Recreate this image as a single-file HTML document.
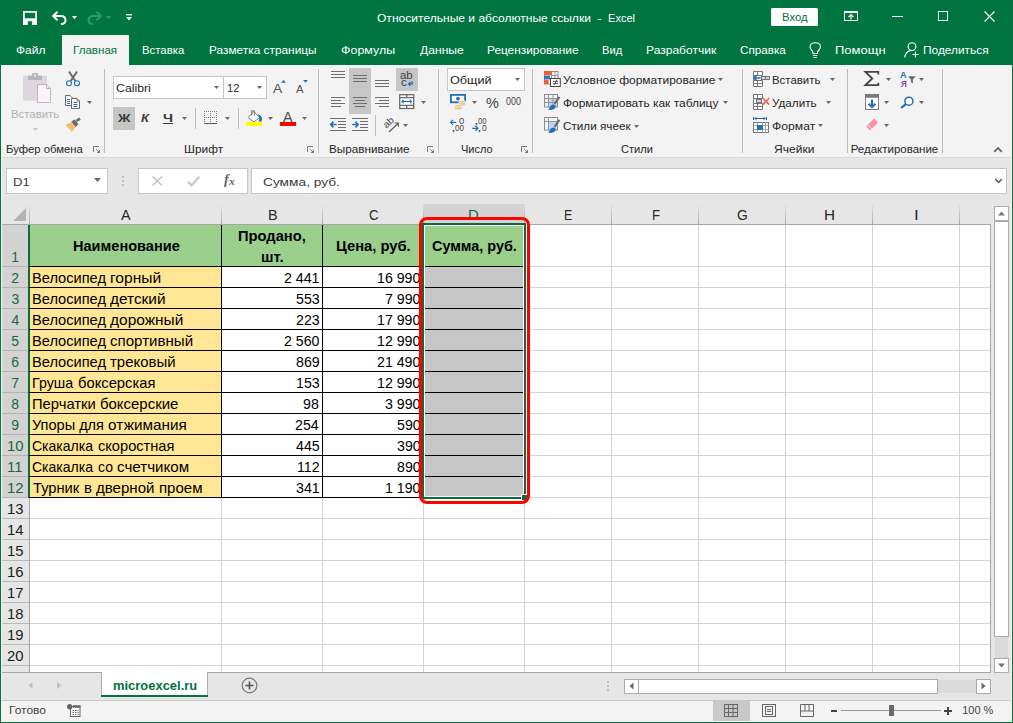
<!DOCTYPE html>
<html><head><meta charset="utf-8"><title>Excel</title>
<style>
html,body{margin:0;padding:0;}
body{width:1013px;height:723px;overflow:hidden;position:relative;background:#e6e6e6;font-family:"Liberation Sans",sans-serif;}
body>div,body>span,body>svg{position:absolute;display:block;}
.t{white-space:pre;transform-origin:0 0;}
svg{overflow:visible;}
</style></head><body>
<div style="left:0px;top:0px;width:1013px;height:65px;background:#007540;"></div>
<div style="left:0px;top:65px;width:1013px;height:92px;background:#f3f3f3;"></div>
<div style="left:62px;top:35px;width:67px;height:31px;background:#f3f3f3;"></div>
<svg style="left:23px;top:11px;" width="14" height="14" viewBox="0 0 14 14"><path d="M0.9 0.9 H13.1 V13.1 H0.9 Z" fill="none" stroke="#fff" stroke-width="1.8"/><rect x="0.9" y="7.3" width="12.2" height="5.8" fill="#fff"/><rect x="4.8" y="10.2" width="4.4" height="3.8" fill="#007540"/></svg>
<svg style="left:51.5px;top:10.5px;" width="15" height="14" viewBox="0 0 15 14"><path d="M5.5 0.8 L1.2 5 L5.5 9.2" fill="none" stroke="#fff" stroke-width="2"/><path d="M1.5 5 H8.5 Q13.5 5 13.5 9.2 Q13.5 13 9 13" fill="none" stroke="#fff" stroke-width="2"/></svg>
<svg style="left:71.5px;top:15.8px;" width="5" height="3.2" viewBox="0 0 5 3.2"><path d="M0 0 H5 L2.5 3.2 Z" fill="#fff"/></svg>
<svg style="left:86.8px;top:10.5px;" width="15" height="14" viewBox="0 0 15 14"><path d="M9.5 0.8 L13.8 5 L9.5 9.2" fill="none" stroke="#2f9a6c" stroke-width="2"/><path d="M13.5 5 H6.5 Q1.5 5 1.5 9.2 Q1.5 13 6 13" fill="none" stroke="#2f9a6c" stroke-width="2"/></svg>
<svg style="left:106.3px;top:15.8px;" width="5" height="3.2" viewBox="0 0 5 3.2"><path d="M0 0 H5 L2.5 3.2 Z" fill="#2f9a6c"/></svg>
<svg style="left:125.5px;top:14.4px;" width="6" height="7" viewBox="0 0 6 7"><path d="M0 0.7 H6" stroke="#fff" stroke-width="1.3"/><path d="M0 2.9 H6 L3 6.4 Z" fill="#fff"/></svg>
<span class="t" style="left:376.93px;top:13px;font-size:11.5px;line-height:11.5px;color:#fff;transform:scaleX(1.0476);">Относительные и абсолютные ссылки</span>
<span class="t" style="left:597.41px;top:13px;font-size:11.5px;line-height:11.5px;color:#fff;transform:scaleX(1.1713);">-</span>
<span class="t" style="left:607.59px;top:13px;font-size:11.5px;line-height:11.5px;color:#fff;transform:scaleX(0.9616);">Excel</span>
<div style="left:771px;top:7.5px;width:47px;height:18.3px;background:#fff;border-radius:1.5px;"></div>
<span class="t" style="left:781.57px;top:12px;font-size:11.5px;line-height:11.5px;color:#007540;transform:scaleX(0.9845);">Вход</span>
<svg style="left:843.5px;top:11px;" width="14" height="10" viewBox="0 0 14 10"><rect x="0.5" y="0.5" width="13" height="9" fill="none" stroke="#fff"/><path d="M0.5 1.2 H13.5" stroke="#fff" stroke-width="1.6"/><path d="M7 8.5 V3.8 M4.6 6 L7 3.6 L9.4 6" fill="none" stroke="#fff" stroke-width="1.1"/></svg>
<div style="left:892px;top:16px;width:10.5px;height:1px;background:#fff;"></div>
<svg style="left:938px;top:11px;" width="10" height="10" viewBox="0 0 10 10"><rect x="0.5" y="0.5" width="9" height="9" fill="none" stroke="#fff" stroke-width="1"/></svg>
<svg style="left:983.5px;top:10.8px;" width="11" height="11" viewBox="0 0 11 11"><path d="M0.5 0.5 L10.5 10.5 M10.5 0.5 L0.5 10.5" stroke="#fff" stroke-width="1.1"/></svg>
<span class="t" style="left:15.82px;top:45px;font-size:11.5px;line-height:11.5px;color:#fff;transform:scaleX(1.0436);">Файл</span>
<span class="t" style="left:141.67px;top:45px;font-size:11.5px;line-height:11.5px;color:#fff;transform:scaleX(0.9877);">Вставка</span>
<span class="t" style="left:208.63px;top:45px;font-size:11.5px;line-height:11.5px;color:#fff;transform:scaleX(1.0313);">Разметка страницы</span>
<span class="t" style="left:340.69px;top:45px;font-size:11.5px;line-height:11.5px;color:#fff;transform:scaleX(1.0823);">Формулы</span>
<span class="t" style="left:419.92px;top:45px;font-size:11.5px;line-height:11.5px;color:#fff;transform:scaleX(1.0546);">Данные</span>
<span class="t" style="left:487.03px;top:45px;font-size:11.5px;line-height:11.5px;color:#fff;transform:scaleX(1.0303);">Рецензирование</span>
<span class="t" style="left:601.68px;top:45px;font-size:11.5px;line-height:11.5px;color:#fff;transform:scaleX(0.9707);">Вид</span>
<span class="t" style="left:645.51px;top:45px;font-size:11.5px;line-height:11.5px;color:#fff;transform:scaleX(1.0471);">Разработчик</span>
<span class="t" style="left:740.02px;top:45px;font-size:11.5px;line-height:11.5px;color:#fff;transform:scaleX(1.0168);">Справка</span>
<span class="t" style="left:834.75px;top:45px;font-size:11.5px;line-height:11.5px;color:#fff;transform:scaleX(1.1291);">Помощн</span>
<span class="t" style="left:922.74px;top:45px;font-size:11.5px;line-height:11.5px;color:#fff;transform:scaleX(1.0325);">Поделиться</span>
<span class="t" style="left:73.15px;top:45px;font-size:11.5px;line-height:11.5px;color:#007540;transform:scaleX(1.0085);">Главная</span>
<svg style="left:809px;top:42px;" width="13" height="17" viewBox="0 0 13 17"><path d="M4 11.5 Q4 9.5 2.5 8 Q1 6.5 1 4.8 Q1.2 0.8 6.2 0.8 Q11.2 0.8 11.4 4.8 Q11.4 6.5 9.9 8 Q8.4 9.5 8.4 11.5 Z" fill="none" stroke="#fff" stroke-width="1.1"/><path d="M4.2 13.5 H8.2 M4.7 15.5 H7.7" stroke="#fff" stroke-width="1.1"/></svg>
<svg style="left:904px;top:42px;" width="15" height="17" viewBox="0 0 15 17"><circle cx="8" cy="4.6" r="3.9" fill="none" stroke="#fff" stroke-width="1.1"/><path d="M0.8 15.5 Q1.5 9.5 6.5 8.6" fill="none" stroke="#fff" stroke-width="1.1"/><path d="M8.5 12.5 H14.5 M11.5 9.5 V15.5" stroke="#fff" stroke-width="1.1"/></svg>
<svg style="left:22px;top:72px;" width="30" height="32" viewBox="0 0 30 32"><rect x="1" y="3.7" width="24" height="25" rx="1.2" fill="#ddd6dd"/>
<rect x="6.1" y="3.7" width="13.8" height="4.2" fill="#b9b1b9"/><rect x="10.2" y="1" width="5.8" height="4" rx="1" fill="#b9b1b9"/><circle cx="13.1" cy="3.6" r="1.1" fill="#f3f3f3"/>
<path d="M15.5 12.5 H24.5 L28.5 16.5 V30.5 H15.5 Z" fill="#faf4fa" stroke="#bfb6bf"/><path d="M24.5 12.5 V16.5 H28.5" fill="none" stroke="#bfb6bf"/></svg>
<span class="t" style="left:10.77px;top:109px;font-size:11.5px;line-height:11.5px;color:#b1b1b1;transform:scaleX(0.9887);">Вставить</span>
<svg style="left:33.0px;top:127.80000000000001px;" width="5" height="3.0" viewBox="0 0 5 3.0"><path d="M0 0 H5 L2.5 3.0 Z" fill="#c4c4c4"/></svg>
<svg style="left:65px;top:71px;" width="16" height="16" viewBox="0 0 16 16"><path d="M4 0.6 L10.3 10 M12 0.6 L5.7 10" stroke="#6a6a6a" stroke-width="1.9" fill="none"/>
<circle cx="4" cy="12.2" r="2.5" fill="none" stroke="#1e72c2" stroke-width="1.1"/><circle cx="12" cy="12.2" r="2.5" fill="none" stroke="#1e72c2" stroke-width="1.1"/></svg>
<svg style="left:64px;top:94px;" width="17" height="16" viewBox="0 0 17 16"><path d="M1.5 1.5 H6 L8.5 4 V11.5 H1.5 Z" fill="#fff" stroke="#6a6a6a"/>
<path d="M3 5.5H6M3 7.5H6M3 9.5H6" stroke="#1e72c2"/>
<path d="M7.5 4.5 H13 L15.5 7 V14.5 H7.5 Z" fill="#fff" stroke="#6a6a6a"/><path d="M13 4.5V7H15.5" fill="none" stroke="#6a6a6a" stroke-width="0.8"/><path d="M9.5 8.5H13.5M9.5 10.5H13.5M9.5 12.5H13.5" stroke="#1e72c2"/></svg>
<svg style="left:87.1px;top:101.0px;" width="5" height="3.0" viewBox="0 0 5 3.0"><path d="M0 0 H5 L2.5 3.0 Z" fill="#666"/></svg>
<svg style="left:65px;top:117px;" width="17" height="16" viewBox="0 0 17 16"><path d="M0.3 8 L6.3 5.2 L10.5 10 L7 14.8 Z" fill="#f5bd6b"/><path d="M6.2 4.6 L9.8 2.4 L13.4 7.2 L10.6 10 Z" fill="#6a6a6a"/><path d="M11.3 4 L15 1.6" stroke="#6a6a6a" stroke-width="2.6"/></svg>
<span class="t" style="left:5.67px;top:144px;font-size:11.5px;line-height:11.5px;color:#262626;transform:scaleX(0.9817);">Буфер обмена</span>
<svg style="left:93px;top:146px;" width="8" height="8" viewBox="0 0 8 8"><path d="M0.5 6 V0.5 H6" fill="none" stroke="#777" stroke-width="1"/><path d="M7 3.6 V7 H3.6 Z" fill="#777"/><path d="M3.2 3.2 L6 6" stroke="#777" stroke-width="1"/></svg>
<div style="left:104px;top:69px;width:1px;height:84px;background:#bcbcbc;"></div>
<div style="left:113px;top:76px;width:111px;height:23px;background:#fff;box-sizing:border-box;border:1px solid #c6c6c6;"></div>
<div style="left:224px;top:76px;width:43px;height:23px;background:#fff;box-sizing:border-box;border:1px solid #c6c6c6;border-left:none;"></div>
<div style="left:223px;top:76px;width:1px;height:23px;background:#c6c6c6;"></div>
<span class="t" style="left:115.69px;top:83px;font-size:11.5px;line-height:11.5px;color:#262626;transform:scaleX(1.0690);">Calibri</span>
<svg style="left:214.0px;top:86.0px;" width="5" height="3.0" viewBox="0 0 5 3.0"><path d="M0 0 H5 L2.5 3.0 Z" fill="#666"/></svg>
<span class="t" style="left:226.85px;top:83px;font-size:11.5px;line-height:11.5px;color:#262626;transform:scaleX(0.9701);">12</span>
<svg style="left:257.0px;top:86.0px;" width="5" height="3.0" viewBox="0 0 5 3.0"><path d="M0 0 H5 L2.5 3.0 Z" fill="#666"/></svg>
<span class="t" style="left:273.27px;top:82px;font-size:13.5px;line-height:13.5px;color:#505050;transform:scaleX(1.0167);">A</span>
<svg style="left:281px;top:80px;" width="5" height="3" viewBox="0 0 5 3"><path d="M0 2.8 L2.5 0 L5 2.8 Z" fill="#1e72c2"/></svg>
<span class="t" style="left:295.98px;top:84px;font-size:10.5px;line-height:10.5px;color:#505050;transform:scaleX(1.0774);">A</span>
<svg style="left:303px;top:80px;" width="5" height="3" viewBox="0 0 5 3"><path d="M0 0 L2.5 2.8 L5 0 Z" fill="#1e72c2"/></svg>
<div style="left:113px;top:107px;width:22px;height:23px;background:#c6c6c6;"></div>
<span class="t" style="left:117.74px;top:113px;font-size:11.5px;line-height:11.5px;color:#3a3a3a;font-weight:700;transform:scaleX(1.1918);">Ж</span>
<span class="t" style="left:140.78px;top:113px;font-size:11.5px;line-height:11.5px;color:#3a3a3a;font-weight:700;font-style:italic;transform:scaleX(1.1284);">К</span>
<span class="t" style="left:162.95px;top:113px;font-size:11.5px;line-height:11.5px;color:#3a3a3a;font-weight:700;transform:scaleX(1.2380);">Ч</span>
<div style="left:163px;top:123px;width:10px;height:1px;background:#3a3a3a;"></div>
<svg style="left:181.8px;top:117.0px;" width="5" height="3.0" viewBox="0 0 5 3.0"><path d="M0 0 H5 L2.5 3.0 Z" fill="#666"/></svg>
<div style="left:195px;top:108px;width:1px;height:21px;background:#bcbcbc;"></div>
<svg style="left:204px;top:111px;" width="13" height="13" viewBox="0 0 13 13"><path d="M0 0.5H13M0 6.5H13M0.5 0V12M6.5 0V12M12.5 0V12" stroke="#7a7a7a" stroke-dasharray="1 1" fill="none" shape-rendering="crispEdges"/><path d="M0 12.5H13" stroke="#555"/></svg>
<svg style="left:225.0px;top:117.0px;" width="5" height="3.0" viewBox="0 0 5 3.0"><path d="M0 0 H5 L2.5 3.0 Z" fill="#666"/></svg>
<div style="left:238px;top:108px;width:1px;height:21px;background:#bcbcbc;"></div>
<svg style="left:246px;top:109px;" width="17" height="17" viewBox="0 0 17 17"><path d="M2.2 8.5 L7.9 2.5 L13.5 8.5 L7.9 13 Z" fill="#fff" stroke="#777" stroke-width="1"/><path d="M5.7 6.4 V1.8 H8.3 V6.4" fill="none" stroke="#777" stroke-width="1"/>
<path d="M11.8 4.8 Q17.4 7.5 15.7 12.4 L12.4 12.4 Q14.4 9.2 11.8 4.8Z" fill="#1e72c2"/>
<rect x="0" y="13" width="16" height="4" fill="#ffff00"/></svg>
<svg style="left:267.8px;top:117.0px;" width="5" height="3.0" viewBox="0 0 5 3.0"><path d="M0 0 H5 L2.5 3.0 Z" fill="#666"/></svg>
<span class="t" style="left:283.47px;top:110px;font-size:14px;line-height:14px;color:#4a4a4a;transform:scaleX(1.0235);">A</span>
<div style="left:280px;top:122px;width:16px;height:4px;background:#ff0000;"></div>
<svg style="left:302.0px;top:117.0px;" width="5" height="3.0" viewBox="0 0 5 3.0"><path d="M0 0 H5 L2.5 3.0 Z" fill="#666"/></svg>
<span class="t" style="left:183.83px;top:144px;font-size:11.5px;line-height:11.5px;color:#262626;transform:scaleX(1.0328);">Шрифт</span>
<svg style="left:307px;top:146px;" width="8" height="8" viewBox="0 0 8 8"><path d="M0.5 6 V0.5 H6" fill="none" stroke="#777" stroke-width="1"/><path d="M7 3.6 V7 H3.6 Z" fill="#777"/><path d="M3.2 3.2 L6 6" stroke="#777" stroke-width="1"/></svg>
<div style="left:318px;top:69px;width:1px;height:84px;background:#bcbcbc;"></div>
<div style="left:349px;top:68px;width:22px;height:46px;background:#c6c6c6;"></div>
<div style="left:396px;top:68px;width:22px;height:23px;background:#c6c6c6;"></div>
<div style="left:331px;top:71px;width:14px;height:1px;background:#6e6e6e;"></div>
<div style="left:331px;top:74px;width:14px;height:1px;background:#6e6e6e;"></div>
<div style="left:331px;top:77px;width:14px;height:1px;background:#6e6e6e;"></div>
<div style="left:353px;top:75px;width:14px;height:1px;background:#6e6e6e;"></div>
<div style="left:353px;top:78px;width:14px;height:1px;background:#6e6e6e;"></div>
<div style="left:353px;top:81px;width:14px;height:1px;background:#6e6e6e;"></div>
<div style="left:375px;top:80px;width:14px;height:1px;background:#6e6e6e;"></div>
<div style="left:375px;top:83px;width:14px;height:1px;background:#6e6e6e;"></div>
<div style="left:375px;top:86px;width:14px;height:1px;background:#6e6e6e;"></div>
<div style="left:331px;top:97px;width:14px;height:1px;background:#6e6e6e;"></div>
<div style="left:353px;top:97px;width:14px;height:1px;background:#6e6e6e;"></div>
<div style="left:375px;top:97px;width:14px;height:1px;background:#6e6e6e;"></div>
<div style="left:331px;top:100px;width:9.699999999999989px;height:1px;background:#6e6e6e;"></div>
<div style="left:355.2px;top:100px;width:9.600000000000023px;height:1px;background:#6e6e6e;"></div>
<div style="left:379.2px;top:100px;width:9.800000000000011px;height:1px;background:#6e6e6e;"></div>
<div style="left:331px;top:103px;width:14px;height:1px;background:#6e6e6e;"></div>
<div style="left:353px;top:103px;width:14px;height:1px;background:#6e6e6e;"></div>
<div style="left:375px;top:103px;width:14px;height:1px;background:#6e6e6e;"></div>
<div style="left:331px;top:106px;width:9.699999999999989px;height:1px;background:#6e6e6e;"></div>
<div style="left:355.2px;top:106px;width:9.600000000000023px;height:1px;background:#6e6e6e;"></div>
<div style="left:379.2px;top:106px;width:9.800000000000011px;height:1px;background:#6e6e6e;"></div>
<span class="t" style="left:400.42px;top:70px;font-size:10.5px;line-height:10.5px;color:#3c3c3c;transform:scaleX(1.0829);">ab</span>
<span class="t" style="left:400.51px;top:77px;font-size:11px;line-height:11px;color:#3c3c3c;transform:scaleX(1.0522);">c</span>
<svg style="left:407.5px;top:80.5px;" width="5" height="5" viewBox="0 0 5 5"><path d="M4.2 0.2 V2.9 H0.8 M2.4 1.1 L0.7 2.9 L2.4 4.7" fill="none" stroke="#1e72c2" stroke-width="1.4"/></svg>
<svg style="left:399px;top:94px;" width="16" height="15" viewBox="0 0 16 15"><rect x="0.7" y="0.7" width="14" height="13.8" fill="#fff" stroke="#6a6a6a" stroke-width="1.3"/><path d="M0.7 3.7H14.7M0.7 11.4H14.7M7.7 0.7V3.7M7.7 11.4V14.5" stroke="#6a6a6a" stroke-width="1.3"/><path d="M2.8 7.5H12.6 M4.6 5.8L2.8 7.5L4.6 9.2M10.8 5.8L12.6 7.5L10.8 9.2" fill="none" stroke="#1e72c2" stroke-width="1.1"/></svg>
<svg style="left:421.0px;top:101.0px;" width="5" height="3.0" viewBox="0 0 5 3.0"><path d="M0 0 H5 L2.5 3.0 Z" fill="#666"/></svg>
<div style="left:330px;top:118px;width:16px;height:1px;background:#6e6e6e;"></div>
<div style="left:338px;top:121px;width:8px;height:1px;background:#6e6e6e;"></div>
<div style="left:338px;top:124px;width:8px;height:1px;background:#6e6e6e;"></div>
<div style="left:338px;top:127px;width:8px;height:1px;background:#6e6e6e;"></div>
<div style="left:330px;top:130px;width:16px;height:1px;background:#6e6e6e;"></div>
<svg style="left:330px;top:121px;" width="7" height="7" viewBox="0 0 7 7"><path d="M0.8 3.5H6.6 M3.4 0.6L0.8 3.5L3.4 6.4" fill="none" stroke="#1e72c2" stroke-width="1.7"/></svg>
<div style="left:352px;top:118px;width:16px;height:1px;background:#6e6e6e;"></div>
<div style="left:360px;top:121px;width:8px;height:1px;background:#6e6e6e;"></div>
<div style="left:360px;top:124px;width:8px;height:1px;background:#6e6e6e;"></div>
<div style="left:360px;top:127px;width:8px;height:1px;background:#6e6e6e;"></div>
<div style="left:352px;top:130px;width:16px;height:1px;background:#6e6e6e;"></div>
<svg style="left:352px;top:121px;" width="7" height="7" viewBox="0 0 7 7"><path d="M0.2 3.5H6 M3.4 0.6L6 3.5L3.4 6.4" fill="none" stroke="#1e72c2" stroke-width="1.7"/></svg>
<div style="left:375px;top:115px;width:1px;height:21px;background:#bcbcbc;"></div>
<svg style="left:382px;top:116px;" width="18" height="17" viewBox="0 0 18 17"><text x="0" y="0" font-size="9.5" fill="#444" font-family="Liberation Sans" transform="translate(4.5 12.5) rotate(-42) scale(1.05 1)">ab</text><path d="M7 16 L16 7.5 M12.5 7 H16.3 V10.8" fill="none" stroke="#555" stroke-width="1.1"/></svg>
<svg style="left:403.0px;top:124.0px;" width="5" height="3.0" viewBox="0 0 5 3.0"><path d="M0 0 H5 L2.5 3.0 Z" fill="#666"/></svg>
<span class="t" style="left:329.34px;top:144px;font-size:11.5px;line-height:11.5px;color:#262626;transform:scaleX(1.0167);">Выравнивание</span>
<svg style="left:427px;top:146px;" width="8" height="8" viewBox="0 0 8 8"><path d="M0.5 6 V0.5 H6" fill="none" stroke="#777" stroke-width="1"/><path d="M7 3.6 V7 H3.6 Z" fill="#777"/><path d="M3.2 3.2 L6 6" stroke="#777" stroke-width="1"/></svg>
<div style="left:438px;top:69px;width:1px;height:84px;background:#bcbcbc;"></div>
<div style="left:447px;top:68px;width:78px;height:23px;background:#fff;box-sizing:border-box;border:1px solid #c6c6c6;"></div>
<span class="t" style="left:449.90px;top:75px;font-size:11.5px;line-height:11.5px;color:#262626;transform:scaleX(1.1010);">Общий</span>
<svg style="left:515.1px;top:78.0px;" width="5" height="3.0" viewBox="0 0 5 3.0"><path d="M0 0 H5 L2.5 3.0 Z" fill="#666"/></svg>
<svg style="left:450px;top:94px;" width="17" height="16" viewBox="0 0 17 16"><rect x="0.9" y="0.9" width="14.2" height="7.4" fill="#fff" stroke="#1e6fbf" stroke-width="1.8"/><circle cx="8" cy="4.6" r="1.9" fill="#1e6fbf"/>
<ellipse cx="12.3" cy="8" rx="3.6" ry="1.5" fill="#f5c07a" stroke="#f3f3f3" stroke-width="0.7"/><ellipse cx="12.3" cy="10" rx="3.6" ry="1.5" fill="#f5c07a" stroke="#f3f3f3" stroke-width="0.7"/><ellipse cx="8.3" cy="12" rx="3.9" ry="1.5" fill="#f5c07a" stroke="#f3f3f3" stroke-width="0.7"/><ellipse cx="8.3" cy="14.2" rx="3.9" ry="1.5" fill="#f5c07a" stroke="#f3f3f3" stroke-width="0.7"/></svg>
<svg style="left:472.0px;top:101.0px;" width="5" height="3.0" viewBox="0 0 5 3.0"><path d="M0 0 H5 L2.5 3.0 Z" fill="#666"/></svg>
<span class="t" style="left:486.20px;top:96px;font-size:14.5px;line-height:14.5px;color:#444;transform:scaleX(0.9936);">%</span>
<span class="t" style="left:506.45px;top:97px;font-size:10px;line-height:10px;color:#444;transform:scaleX(0.8925);">000</span>
<svg style="left:450px;top:118.5px;" width="7" height="7" viewBox="0 0 7 7"><path d="M0.6 3.3H6.2 M3 0.8L0.6 3.3L3 5.8" fill="none" stroke="#1e6fbf" stroke-width="1.2"/></svg>
<span class="t" style="left:459.33px;top:117px;font-size:8.8px;line-height:8.8px;color:#444;transform:scaleX(1.0676);">0</span>
<span class="t" style="left:455.48px;top:124px;font-size:8.8px;line-height:8.8px;color:#444;transform:scaleX(0.9223);">00</span>
<span class="t" style="left:450.77px;top:124px;font-size:9px;line-height:9px;color:#444;transform:scaleX(1.9080);">,</span>
<svg style="left:472px;top:125.3px;" width="7" height="7" viewBox="0 0 7 7"><path d="M0.2 3.3H6 M3.4 0.8L6 3.3L3.4 5.8" fill="none" stroke="#1e6fbf" stroke-width="1.2"/></svg>
<span class="t" style="left:478.00px;top:117px;font-size:8.8px;line-height:8.8px;color:#444;transform:scaleX(0.8783);">00</span>
<span class="t" style="left:473.97px;top:117px;font-size:9px;line-height:9px;color:#444;transform:scaleX(1.9080);">,</span>
<span class="t" style="left:481.87px;top:124px;font-size:8.8px;line-height:8.8px;color:#444;transform:scaleX(0.9727);">0</span>
<span class="t" style="left:477.47px;top:124px;font-size:9px;line-height:9px;color:#444;transform:scaleX(1.9080);">,</span>
<span class="t" style="left:461.04px;top:144px;font-size:11.5px;line-height:11.5px;color:#262626;transform:scaleX(0.9588);">Число</span>
<svg style="left:521px;top:146px;" width="8" height="8" viewBox="0 0 8 8"><path d="M0.5 6 V0.5 H6" fill="none" stroke="#777" stroke-width="1"/><path d="M7 3.6 V7 H3.6 Z" fill="#777"/><path d="M3.2 3.2 L6 6" stroke="#777" stroke-width="1"/></svg>
<div style="left:532px;top:69px;width:1px;height:84px;background:#bcbcbc;"></div>
<svg style="left:544px;top:71px;" width="17" height="16" viewBox="0 0 17 16"><rect x="0.5" y="0.5" width="13.5" height="12.5" fill="#fff" stroke="#8c8c8c"/><path d="M7.5 0.5V8M11 0.5V8M7.5 4.5H14" stroke="#8c8c8c" stroke-width="0.9"/>
<rect x="0" y="0" width="7.5" height="4.2" fill="#f25c2e"/><rect x="0" y="4.6" width="6.2" height="3.8" fill="#2e75c8"/><rect x="0" y="8.8" width="4.6" height="4.2" fill="#f25c2e"/>
<rect x="6.5" y="7.5" width="9.8" height="8" fill="#fff" stroke="#4a4a4a"/><path d="M8.8 10.3H14M8.8 12.7H14M12.8 8.8L10.2 14.2" stroke="#4a4a4a" stroke-width="0.9"/></svg>
<span class="t" style="left:563.19px;top:75px;font-size:11.5px;line-height:11.5px;color:#262626;transform:scaleX(1.0413);">Условное форматирование</span>
<svg style="left:718.0px;top:78.0px;" width="5" height="3.0" viewBox="0 0 5 3.0"><path d="M0 0 H5 L2.5 3.0 Z" fill="#666"/></svg>
<svg style="left:544px;top:94px;" width="17" height="16" viewBox="0 0 17 16"><rect x="4.5" y="4.5" width="9" height="8.5" fill="#bdd7ee"/><rect x="0.5" y="0.5" width="13" height="12.5" fill="none" stroke="#8c8c8c"/><path d="M0.5 4.5H13.5M0.5 8.5H13.5M4.5 0.5V13M9 0.5V13" stroke="#8c8c8c" stroke-width="0.9"/><path d="M16.3 3.6 L14.6 2.2 L9.6 9.2 L11.4 10.6 Z" fill="#6b6b6b"/><path d="M4.2 15.6 Q5.2 14.8 5.8 13 Q6.6 10.6 9.3 10.4 Q12 10.6 11.6 12.8 Q11 15.6 7 15.9 Q5.2 16 4.2 15.6Z" fill="#1e6fbf"/></svg>
<span class="t" style="left:563.12px;top:98px;font-size:11.5px;line-height:11.5px;color:#262626;transform:scaleX(1.0386);">Форматировать как таблицу</span>
<svg style="left:722.5px;top:101.0px;" width="5" height="3.0" viewBox="0 0 5 3.0"><path d="M0 0 H5 L2.5 3.0 Z" fill="#666"/></svg>
<svg style="left:544px;top:117px;" width="17" height="16" viewBox="0 0 17 16"><rect x="4.5" y="4.5" width="9" height="8.5" fill="#bdd7ee"/><rect x="0.5" y="0.5" width="13" height="12.5" fill="none" stroke="#8c8c8c"/><path d="M0.5 4.5H13.5M4.5 0.5V13" stroke="#8c8c8c" stroke-width="0.9"/><path d="M16.3 3.6 L14.6 2.2 L9.6 9.2 L11.4 10.6 Z" fill="#6b6b6b"/><path d="M4.2 15.6 Q5.2 14.8 5.8 13 Q6.6 10.6 9.3 10.4 Q12 10.6 11.6 12.8 Q11 15.6 7 15.9 Q5.2 16 4.2 15.6Z" fill="#1e6fbf"/></svg>
<span class="t" style="left:563.22px;top:121px;font-size:11.5px;line-height:11.5px;color:#262626;transform:scaleX(1.0173);">Стили ячеек</span>
<svg style="left:634.2px;top:124.5px;" width="5" height="3.0" viewBox="0 0 5 3.0"><path d="M0 0 H5 L2.5 3.0 Z" fill="#666"/></svg>
<span class="t" style="left:621.25px;top:144px;font-size:11.5px;line-height:11.5px;color:#262626;transform:scaleX(0.9634);">Стили</span>
<div style="left:742px;top:69px;width:1px;height:84px;background:#bcbcbc;"></div>
<svg style="left:753px;top:71px;" width="17" height="16" viewBox="0 0 17 16"><path d="M0.5 0.5H9.5V4.5H0.5Z M4.5 0.5V4.5 M0.5 4.5V9.5 M0.5 9.5H9.5V15.5H0.5Z M4.5 9.5V15.5 M0.5 12.5H9.5" fill="#fff" stroke="#767676"/>
<rect x="8.5" y="5.5" width="8" height="3" fill="#c5ddf3" stroke="#767676"/><path d="M12.5 5.5V8.5" stroke="#767676"/>
<path d="M1 7H7.5 M3.8 4.2L1 7L3.8 9.8" fill="none" stroke="#1e6fbf" stroke-width="1.6"/></svg>
<span class="t" style="left:771.66px;top:75px;font-size:11.5px;line-height:11.5px;color:#262626;transform:scaleX(0.9929);">Вставить</span>
<svg style="left:830.1px;top:78.0px;" width="5" height="3.0" viewBox="0 0 5 3.0"><path d="M0 0 H5 L2.5 3.0 Z" fill="#666"/></svg>
<svg style="left:753px;top:94px;" width="17" height="16" viewBox="0 0 17 16"><path d="M0.5 0.5H9.5V4.5H0.5Z M4.5 0.5V4.5 M0.5 4.5V9.5 M0.5 9.5H9.5V15.5H0.5Z M4.5 9.5V15.5 M0.5 12.5H9.5" fill="#fff" stroke="#767676"/>
<rect x="3.5" y="5.5" width="5" height="3" fill="#c5ddf3" stroke="#767676"/>
<path d="M9.8 4 L16.2 10.6 M16.2 4 L9.8 10.6" stroke="#f2604d" stroke-width="1.6"/></svg>
<span class="t" style="left:771.70px;top:98px;font-size:11.5px;line-height:11.5px;color:#262626;transform:scaleX(1.0154);">Удалить</span>
<svg style="left:825.7px;top:101.0px;" width="5" height="3.0" viewBox="0 0 5 3.0"><path d="M0 0 H5 L2.5 3.0 Z" fill="#666"/></svg>
<svg style="left:753px;top:117px;" width="17" height="16" viewBox="0 0 17 16"><path d="M0.5 0V3 M13.5 0V3 M1.5 1.5H12.5 M3.5 0L2 1.5L3.5 3 M10.5 0L12 1.5L10.5 3" fill="none" stroke="#1e6fbf" stroke-width="1"/>
<rect x="0.5" y="5.5" width="15" height="10" fill="#fff" stroke="#767676"/><path d="M0.5 8.5H15.5M0.5 12.5H15.5M4.5 5.5V15.5M9.5 5.5V15.5M12.5 5.5V15.5" stroke="#a8a8a8" stroke-width="1"/><rect x="4" y="8" width="6" height="5" fill="#1e6fbf"/></svg>
<span class="t" style="left:771.91px;top:121px;font-size:11.5px;line-height:11.5px;color:#262626;transform:scaleX(1.0576);">Формат</span>
<svg style="left:818.0px;top:124.0px;" width="5" height="3.0" viewBox="0 0 5 3.0"><path d="M0 0 H5 L2.5 3.0 Z" fill="#666"/></svg>
<span class="t" style="left:773.75px;top:144px;font-size:11.5px;line-height:11.5px;color:#262626;transform:scaleX(1.0470);">Ячейки</span>
<div style="left:847px;top:69px;width:1px;height:84px;background:#bcbcbc;"></div>
<svg style="left:864px;top:71px;" width="16" height="15" viewBox="0 0 16 15"><path d="M14.3 3.4 V0.9 H1.4 L8.3 7.5 L1.4 14.2 H14.3 V11.7" fill="none" stroke="#444" stroke-width="1.8"/></svg>
<svg style="left:885.9px;top:78.0px;" width="5" height="3.0" viewBox="0 0 5 3.0"><path d="M0 0 H5 L2.5 3.0 Z" fill="#666"/></svg>
<span class="t" style="left:899.68px;top:71px;font-size:8.8px;line-height:8.8px;color:#1e6fbf;font-weight:700;transform:scaleX(1.0315);">А</span>
<span class="t" style="left:900.56px;top:80px;font-size:8.8px;line-height:8.8px;color:#9144a8;font-weight:700;transform:scaleX(0.9127);">Я</span>
<svg style="left:907.5px;top:75.5px;" width="8" height="8" viewBox="0 0 8 8"><path d="M0 0.3H7.8L4.9 3.6V7.5L2.9 6.3V3.6Z" fill="#6a6a6a"/></svg>
<svg style="left:919.0px;top:78.0px;" width="5" height="3.0" viewBox="0 0 5 3.0"><path d="M0 0 H5 L2.5 3.0 Z" fill="#666"/></svg>
<svg style="left:865px;top:94px;" width="14" height="16" viewBox="0 0 14 16"><rect x="0.5" y="0.5" width="13" height="15" fill="#fff" stroke="#7a7a7a"/><rect x="0" y="0" width="14" height="3.8" fill="#777"/><path d="M7 5.5V13 M3.6 9.8L7 13.2L10.4 9.8" fill="none" stroke="#1e6fbf" stroke-width="2"/></svg>
<svg style="left:884.0px;top:101.0px;" width="5" height="3.0" viewBox="0 0 5 3.0"><path d="M0 0 H5 L2.5 3.0 Z" fill="#666"/></svg>
<svg style="left:899.5px;top:95.5px;" width="15" height="13" viewBox="0 0 15 13"><circle cx="8.9" cy="5.2" r="4" fill="#fff" stroke="#1e6fbf" stroke-width="1.5"/><path d="M5.8 8.2 L1.2 12" stroke="#1e6fbf" stroke-width="2.2"/></svg>
<svg style="left:919.0px;top:101.0px;" width="5" height="3.0" viewBox="0 0 5 3.0"><path d="M0 0 H5 L2.5 3.0 Z" fill="#666"/></svg>
<svg style="left:865px;top:117.5px;" width="14" height="14" viewBox="0 0 14 14"><path d="M9 0.6 L13 4.6 L5.2 12.6 L1.2 8.6 Z" fill="#ff8fa3"/><path d="M2.9 6.9 L6.9 10.9" stroke="#f3f3f3" stroke-width="1"/></svg>
<svg style="left:884.0px;top:124.0px;" width="5" height="3.0" viewBox="0 0 5 3.0"><path d="M0 0 H5 L2.5 3.0 Z" fill="#666"/></svg>
<span class="t" style="left:850.66px;top:144px;font-size:11.5px;line-height:11.5px;color:#262626;">Редактирование</span>
<div style="left:942px;top:69px;width:1px;height:84px;background:#bcbcbc;"></div>
<svg style="left:992.5px;top:145.5px;" width="10" height="7" viewBox="0 0 10 7"><path d="M1.2 5.8 L5 2 L8.8 5.8" fill="none" stroke="#6a6a6a" stroke-width="1.9"/></svg>
<div style="left:0px;top:157px;width:1013px;height:1px;background:#d8d8d8;"></div>
<div style="left:6px;top:168px;width:102px;height:26px;background:#fff;box-sizing:border-box;border:1px solid #c6c6c6;"></div>
<span class="t" style="left:12.72px;top:177px;font-size:11.5px;line-height:11.5px;color:#3a3a3a;transform:scaleX(1.1438);">D1</span>
<svg style="left:93.5px;top:178px;" width="8" height="5" viewBox="0 0 8 5"><path d="M0 0 H7 L3.5 4 Z" fill="#666"/></svg>
<div style="left:122px;top:176px;width:2px;height:2px;background:#b0b0b0;border-radius:1px;"></div>
<div style="left:122px;top:180px;width:2px;height:2px;background:#b0b0b0;border-radius:1px;"></div>
<div style="left:122px;top:184px;width:2px;height:2px;background:#b0b0b0;border-radius:1px;"></div>
<div style="left:138px;top:168px;width:110px;height:26px;background:#fff;box-sizing:border-box;border:1px solid #c6c6c6;"></div>
<svg style="left:151.5px;top:176px;" width="11" height="10" viewBox="0 0 11 10"><path d="M0.5 0.5 L10 9.5 M10 0.5 L0.5 9.5" stroke="#c2c2c2" stroke-width="1.5" fill="none"/></svg>
<svg style="left:187px;top:176px;" width="13" height="11" viewBox="0 0 13 11"><path d="M0.8 5.6 L4.6 9.3 L12.2 0.8" stroke="#c8c8c8" stroke-width="2.2" fill="none"/></svg>
<span class="t" style="left:223.50px;top:172px;font-size:15px;line-height:15px;color:#666;font-weight:700;font-style:italic;font-family:'Liberation Serif',serif;transform:scaleX(0.9615);">f</span>
<span class="t" style="left:229.45px;top:178px;font-size:9.5px;line-height:9.5px;color:#666;font-weight:700;font-style:italic;font-family:'Liberation Serif',serif;transform:scaleX(1.2270);">x</span>
<div style="left:251px;top:168px;width:756px;height:26px;background:#fff;box-sizing:border-box;border:1px solid #c6c6c6;"></div>
<span class="t" style="left:262.61px;top:177px;font-size:11.5px;line-height:11.5px;color:#3a3a3a;transform:scaleX(1.1936);">Сумма, руб.</span>
<svg style="left:994px;top:177.5px;" width="10" height="6" viewBox="0 0 10 6"><path d="M1.3 1 L4.6 4.4 L7.9 1" stroke="#606060" stroke-width="1.6" fill="none"/></svg>
<div style="left:30px;top:225px;width:961px;height:447px;background:#fff;"></div>
<div style="left:0px;top:204px;width:991px;height:20px;background:#e6e6e6;"></div>
<div style="left:0px;top:224px;width:991px;height:1px;background:#a6a6a6;"></div>
<div style="left:0px;top:225px;width:29px;height:447px;background:#e6e6e6;"></div>
<div style="left:29px;top:225px;width:1px;height:447px;background:#a6a6a6;"></div>
<div style="left:221px;top:225px;width:1px;height:447px;background:#d4d4d4;"></div>
<div style="left:322px;top:225px;width:1px;height:447px;background:#d4d4d4;"></div>
<div style="left:423px;top:225px;width:1px;height:447px;background:#d4d4d4;"></div>
<div style="left:524px;top:225px;width:1px;height:447px;background:#d4d4d4;"></div>
<div style="left:611px;top:225px;width:1px;height:447px;background:#d4d4d4;"></div>
<div style="left:698px;top:225px;width:1px;height:447px;background:#d4d4d4;"></div>
<div style="left:785px;top:225px;width:1px;height:447px;background:#d4d4d4;"></div>
<div style="left:872px;top:225px;width:1px;height:447px;background:#d4d4d4;"></div>
<div style="left:959px;top:225px;width:1px;height:447px;background:#d4d4d4;"></div>
<div style="left:30px;top:266px;width:961px;height:1px;background:#d4d4d4;"></div>
<div style="left:30px;top:287px;width:961px;height:1px;background:#d4d4d4;"></div>
<div style="left:30px;top:308px;width:961px;height:1px;background:#d4d4d4;"></div>
<div style="left:30px;top:329px;width:961px;height:1px;background:#d4d4d4;"></div>
<div style="left:30px;top:350px;width:961px;height:1px;background:#d4d4d4;"></div>
<div style="left:30px;top:371px;width:961px;height:1px;background:#d4d4d4;"></div>
<div style="left:30px;top:392px;width:961px;height:1px;background:#d4d4d4;"></div>
<div style="left:30px;top:413px;width:961px;height:1px;background:#d4d4d4;"></div>
<div style="left:30px;top:434px;width:961px;height:1px;background:#d4d4d4;"></div>
<div style="left:30px;top:455px;width:961px;height:1px;background:#d4d4d4;"></div>
<div style="left:30px;top:476px;width:961px;height:1px;background:#d4d4d4;"></div>
<div style="left:30px;top:497px;width:961px;height:1px;background:#d4d4d4;"></div>
<div style="left:30px;top:518px;width:961px;height:1px;background:#d4d4d4;"></div>
<div style="left:30px;top:539px;width:961px;height:1px;background:#d4d4d4;"></div>
<div style="left:30px;top:560px;width:961px;height:1px;background:#d4d4d4;"></div>
<div style="left:30px;top:581px;width:961px;height:1px;background:#d4d4d4;"></div>
<div style="left:30px;top:602px;width:961px;height:1px;background:#d4d4d4;"></div>
<div style="left:30px;top:623px;width:961px;height:1px;background:#d4d4d4;"></div>
<div style="left:30px;top:644px;width:961px;height:1px;background:#d4d4d4;"></div>
<div style="left:30px;top:665px;width:961px;height:1px;background:#d4d4d4;"></div>
<div style="left:0px;top:225px;width:28px;height:273px;background:#d3d3d3;"></div>
<div style="left:0px;top:266px;width:29px;height:1px;background:#b4b4b4;"></div>
<div style="left:0px;top:287px;width:29px;height:1px;background:#b4b4b4;"></div>
<div style="left:0px;top:308px;width:29px;height:1px;background:#b4b4b4;"></div>
<div style="left:0px;top:329px;width:29px;height:1px;background:#b4b4b4;"></div>
<div style="left:0px;top:350px;width:29px;height:1px;background:#b4b4b4;"></div>
<div style="left:0px;top:371px;width:29px;height:1px;background:#b4b4b4;"></div>
<div style="left:0px;top:392px;width:29px;height:1px;background:#b4b4b4;"></div>
<div style="left:0px;top:413px;width:29px;height:1px;background:#b4b4b4;"></div>
<div style="left:0px;top:434px;width:29px;height:1px;background:#b4b4b4;"></div>
<div style="left:0px;top:455px;width:29px;height:1px;background:#b4b4b4;"></div>
<div style="left:0px;top:476px;width:29px;height:1px;background:#b4b4b4;"></div>
<div style="left:0px;top:497px;width:29px;height:1px;background:#b4b4b4;"></div>
<div style="left:0px;top:518px;width:29px;height:1px;background:#b8b8b8;"></div>
<div style="left:0px;top:539px;width:29px;height:1px;background:#b8b8b8;"></div>
<div style="left:0px;top:560px;width:29px;height:1px;background:#b8b8b8;"></div>
<div style="left:0px;top:581px;width:29px;height:1px;background:#b8b8b8;"></div>
<div style="left:0px;top:602px;width:29px;height:1px;background:#b8b8b8;"></div>
<div style="left:0px;top:623px;width:29px;height:1px;background:#b8b8b8;"></div>
<div style="left:0px;top:644px;width:29px;height:1px;background:#b8b8b8;"></div>
<div style="left:0px;top:665px;width:29px;height:1px;background:#b8b8b8;"></div>
<div style="left:28px;top:225px;width:2px;height:273px;background:#0f6b3b;"></div>
<div style="left:423px;top:204px;width:102px;height:20px;background:#d3d3d3;"></div>
<div style="left:221px;top:205px;width:1px;height:19px;background:linear-gradient(#e0e0e0,#a8a8a8);"></div>
<div style="left:322px;top:205px;width:1px;height:19px;background:linear-gradient(#e0e0e0,#a8a8a8);"></div>
<div style="left:423px;top:205px;width:1px;height:19px;background:linear-gradient(#e0e0e0,#a8a8a8);"></div>
<div style="left:524px;top:205px;width:1px;height:19px;background:linear-gradient(#e0e0e0,#a8a8a8);"></div>
<div style="left:611px;top:205px;width:1px;height:19px;background:linear-gradient(#e0e0e0,#a8a8a8);"></div>
<div style="left:698px;top:205px;width:1px;height:19px;background:linear-gradient(#e0e0e0,#a8a8a8);"></div>
<div style="left:785px;top:205px;width:1px;height:19px;background:linear-gradient(#e0e0e0,#a8a8a8);"></div>
<div style="left:872px;top:205px;width:1px;height:19px;background:linear-gradient(#e0e0e0,#a8a8a8);"></div>
<div style="left:959px;top:205px;width:1px;height:19px;background:linear-gradient(#e0e0e0,#a8a8a8);"></div>
<div style="left:29px;top:205px;width:1px;height:19px;background:linear-gradient(#e0e0e0,#a8a8a8);"></div>
<div style="left:424px;top:223px;width:100px;height:2px;background:#0f6b3b;"></div>
<svg style="left:13px;top:208px;" width="13" height="13" viewBox="0 0 13 13"><path d="M13 0 V13 H0 Z" fill="#b4b4b4"/></svg>
<span class="t" style="left:120.87px;top:208px;font-size:14px;line-height:14px;color:#262626;transform:scaleX(1.0235);">A</span>
<span class="t" style="left:267.62px;top:208px;font-size:14px;line-height:14px;color:#262626;transform:scaleX(1.0319);">B</span>
<span class="t" style="left:368.94px;top:208px;font-size:14px;line-height:14px;color:#262626;transform:scaleX(0.9449);">C</span>
<span class="t" style="left:468.18px;top:208px;font-size:14px;line-height:14px;color:#0f6b3b;transform:scaleX(1.0600);">D</span>
<span class="t" style="left:563.99px;top:208px;font-size:14px;line-height:14px;color:#262626;transform:scaleX(0.8813);">E</span>
<span class="t" style="left:651.61px;top:208px;font-size:14px;line-height:14px;color:#262626;transform:scaleX(0.9495);">F</span>
<span class="t" style="left:736.70px;top:208px;font-size:14px;line-height:14px;color:#262626;transform:scaleX(0.9939);">G</span>
<span class="t" style="left:823.65px;top:208px;font-size:14px;line-height:14px;color:#262626;transform:scaleX(1.0861);">H</span>
<span class="t" style="left:913.63px;top:208px;font-size:14px;line-height:14px;color:#262626;transform:scaleX(1.2158);">I</span>
<span class="t" style="left:11.16px;top:250px;font-size:14px;line-height:14px;color:#0f6b3b;">1</span>
<span class="t" style="left:11.36px;top:271px;font-size:14px;line-height:14px;color:#0f6b3b;">2</span>
<span class="t" style="left:11.39px;top:292px;font-size:14px;line-height:14px;color:#0f6b3b;">3</span>
<span class="t" style="left:11.41px;top:313px;font-size:14px;line-height:14px;color:#0f6b3b;">4</span>
<span class="t" style="left:11.37px;top:334px;font-size:14px;line-height:14px;color:#0f6b3b;">5</span>
<span class="t" style="left:11.31px;top:355px;font-size:14px;line-height:14px;color:#0f6b3b;">6</span>
<span class="t" style="left:11.35px;top:376px;font-size:14px;line-height:14px;color:#0f6b3b;">7</span>
<span class="t" style="left:11.36px;top:397px;font-size:14px;line-height:14px;color:#0f6b3b;">8</span>
<span class="t" style="left:11.37px;top:418px;font-size:14px;line-height:14px;color:#0f6b3b;">9</span>
<span class="t" style="left:6.72px;top:439px;font-size:14px;line-height:14px;color:#0f6b3b;transform:scaleX(1.0600);">10</span>
<span class="t" style="left:7.34px;top:460px;font-size:14px;line-height:14px;color:#0f6b3b;transform:scaleX(1.0600);">11</span>
<span class="t" style="left:6.81px;top:481px;font-size:14px;line-height:14px;color:#0f6b3b;transform:scaleX(1.0600);">12</span>
<span class="t" style="left:6.75px;top:502px;font-size:14px;line-height:14px;color:#1c1c1c;transform:scaleX(1.0600);">13</span>
<span class="t" style="left:6.65px;top:523px;font-size:14px;line-height:14px;color:#1c1c1c;transform:scaleX(1.0600);">14</span>
<span class="t" style="left:6.74px;top:544px;font-size:14px;line-height:14px;color:#1c1c1c;transform:scaleX(1.0600);">15</span>
<span class="t" style="left:6.75px;top:565px;font-size:14px;line-height:14px;color:#1c1c1c;transform:scaleX(1.0600);">16</span>
<span class="t" style="left:6.81px;top:586px;font-size:14px;line-height:14px;color:#1c1c1c;transform:scaleX(1.0600);">17</span>
<span class="t" style="left:6.75px;top:607px;font-size:14px;line-height:14px;color:#1c1c1c;transform:scaleX(1.0600);">18</span>
<span class="t" style="left:6.78px;top:628px;font-size:14px;line-height:14px;color:#1c1c1c;transform:scaleX(1.0600);">19</span>
<span class="t" style="left:6.91px;top:649px;font-size:14px;line-height:14px;color:#1c1c1c;transform:scaleX(1.0600);">20</span>
<div style="left:30px;top:225px;width:191px;height:41px;background:#9ad08c;"></div>
<div style="left:222px;top:225px;width:100px;height:41px;background:#9ad08c;"></div>
<div style="left:323px;top:225px;width:100px;height:41px;background:#9ad08c;"></div>
<div style="left:424px;top:225px;width:100px;height:41px;background:#9ad08c;"></div>
<div style="left:30px;top:267px;width:191px;height:230px;background:#ffe694;"></div>
<div style="left:424px;top:267px;width:100px;height:230px;background:#c6c6c6;"></div>
<div style="left:221px;top:225px;width:1px;height:273px;background:#000;"></div>
<div style="left:322px;top:225px;width:1px;height:273px;background:#000;"></div>
<div style="left:423px;top:225px;width:1px;height:273px;background:#000;"></div>
<div style="left:29px;top:266px;width:495px;height:1px;background:#000;"></div>
<div style="left:29px;top:287px;width:495px;height:1px;background:#000;"></div>
<div style="left:29px;top:308px;width:495px;height:1px;background:#000;"></div>
<div style="left:29px;top:329px;width:495px;height:1px;background:#000;"></div>
<div style="left:29px;top:350px;width:495px;height:1px;background:#000;"></div>
<div style="left:29px;top:371px;width:495px;height:1px;background:#000;"></div>
<div style="left:29px;top:392px;width:495px;height:1px;background:#000;"></div>
<div style="left:29px;top:413px;width:495px;height:1px;background:#000;"></div>
<div style="left:29px;top:434px;width:495px;height:1px;background:#000;"></div>
<div style="left:29px;top:455px;width:495px;height:1px;background:#000;"></div>
<div style="left:29px;top:476px;width:495px;height:1px;background:#000;"></div>
<div style="left:29px;top:497px;width:495px;height:1px;background:#000;"></div>
<span class="t" style="left:72.54px;top:239px;font-size:14px;line-height:14px;color:#000;font-weight:700;transform:scaleX(1.0394);">Наименование</span>
<span class="t" style="left:237.73px;top:229px;font-size:14px;line-height:14px;color:#000;font-weight:700;transform:scaleX(1.0496);">Продано,</span>
<span class="t" style="left:260.76px;top:250px;font-size:14px;line-height:14px;color:#000;font-weight:700;transform:scaleX(1.0753);">шт.</span>
<span class="t" style="left:335.73px;top:239px;font-size:14px;line-height:14px;color:#000;font-weight:700;transform:scaleX(1.0535);">Цена, руб.</span>
<span class="t" style="left:432.01px;top:239px;font-size:14px;line-height:14px;color:#000;font-weight:700;transform:scaleX(1.0276);">Сумма, руб.</span>
<span class="t" style="left:31.90px;top:271px;font-size:14.5px;line-height:14.5px;color:#000;transform:scaleX(1.0081);">Велосипед</span>
<span class="t" style="left:109.83px;top:271px;font-size:14.5px;line-height:14.5px;color:#000;transform:scaleX(1.0738);">горный</span>
<span class="t" style="left:31.90px;top:292px;font-size:14.5px;line-height:14.5px;color:#000;transform:scaleX(1.0081);">Велосипед</span>
<span class="t" style="left:109.76px;top:292px;font-size:14.5px;line-height:14.5px;color:#000;transform:scaleX(1.0609);">детский</span>
<span class="t" style="left:31.90px;top:313px;font-size:14.5px;line-height:14.5px;color:#000;transform:scaleX(1.0081);">Велосипед</span>
<span class="t" style="left:109.76px;top:313px;font-size:14.5px;line-height:14.5px;color:#000;transform:scaleX(1.0666);">дорожный</span>
<span class="t" style="left:31.90px;top:334px;font-size:14.5px;line-height:14.5px;color:#000;transform:scaleX(1.0081);">Велосипед</span>
<span class="t" style="left:110.27px;top:334px;font-size:14.5px;line-height:14.5px;color:#000;transform:scaleX(1.0398);">спортивный</span>
<span class="t" style="left:31.90px;top:355px;font-size:14.5px;line-height:14.5px;color:#000;transform:scaleX(1.0081);">Велосипед</span>
<span class="t" style="left:110.05px;top:355px;font-size:14.5px;line-height:14.5px;color:#000;transform:scaleX(1.0302);">трековый</span>
<span class="t" style="left:31.93px;top:376px;font-size:14.5px;line-height:14.5px;color:#000;transform:scaleX(0.9800);">Груша</span>
<span class="t" style="left:78.04px;top:376px;font-size:14.5px;line-height:14.5px;color:#000;transform:scaleX(1.0168);">боксерская</span>
<span class="t" style="left:31.90px;top:397px;font-size:14.5px;line-height:14.5px;color:#000;transform:scaleX(1.0190);">Перчатки</span>
<span class="t" style="left:99.83px;top:397px;font-size:14.5px;line-height:14.5px;color:#000;transform:scaleX(1.0305);">боксерские</span>
<span class="t" style="left:31.62px;top:418px;font-size:14.5px;line-height:14.5px;color:#000;transform:scaleX(1.0051);">Упоры</span>
<span class="t" style="left:79.17px;top:418px;font-size:14.5px;line-height:14.5px;color:#000;">для</span>
<span class="t" style="left:108.36px;top:418px;font-size:14.5px;line-height:14.5px;color:#000;transform:scaleX(1.0541);">отжимания</span>
<span class="t" style="left:31.80px;top:439px;font-size:14.5px;line-height:14.5px;color:#000;transform:scaleX(0.9664);">Скакалка</span>
<span class="t" style="left:98.09px;top:439px;font-size:14.5px;line-height:14.5px;color:#000;transform:scaleX(1.0085);">скоростная</span>
<span class="t" style="left:31.80px;top:460px;font-size:14.5px;line-height:14.5px;color:#000;transform:scaleX(0.9664);">Скакалка</span>
<span class="t" style="left:98.11px;top:460px;font-size:14.5px;line-height:14.5px;color:#000;transform:scaleX(0.9672);">со</span>
<span class="t" style="left:117.16px;top:460px;font-size:14.5px;line-height:14.5px;color:#000;transform:scaleX(1.0452);">счетчиком</span>
<span class="t" style="left:32.58px;top:481px;font-size:14.5px;line-height:14.5px;color:#000;transform:scaleX(1.0132);">Турник</span>
<span class="t" style="left:83.86px;top:481px;font-size:14.5px;line-height:14.5px;color:#000;transform:scaleX(1.0370);">в</span>
<span class="t" style="left:95.96px;top:481px;font-size:14.5px;line-height:14.5px;color:#000;transform:scaleX(1.0386);">дверной</span>
<span class="t" style="left:158.87px;top:481px;font-size:14.5px;line-height:14.5px;color:#000;transform:scaleX(1.0345);">проем</span>
<span class="t" style="left:283.79px;top:271px;font-size:14.5px;line-height:14.5px;color:#000;transform:scaleX(0.9783);">2 441</span>
<span class="t" style="left:377.16px;top:271px;font-size:14.5px;line-height:14.5px;color:#000;transform:scaleX(0.9783);">16 990</span>
<span class="t" style="left:295.55px;top:292px;font-size:14.5px;line-height:14.5px;color:#000;transform:scaleX(0.9783);">553</span>
<span class="t" style="left:385.05px;top:292px;font-size:14.5px;line-height:14.5px;color:#000;transform:scaleX(0.9783);">7 990</span>
<span class="t" style="left:295.55px;top:313px;font-size:14.5px;line-height:14.5px;color:#000;transform:scaleX(0.9783);">223</span>
<span class="t" style="left:377.16px;top:313px;font-size:14.5px;line-height:14.5px;color:#000;transform:scaleX(0.9783);">17 990</span>
<span class="t" style="left:283.65px;top:334px;font-size:14.5px;line-height:14.5px;color:#000;transform:scaleX(0.9783);">2 560</span>
<span class="t" style="left:377.16px;top:334px;font-size:14.5px;line-height:14.5px;color:#000;transform:scaleX(0.9783);">12 990</span>
<span class="t" style="left:295.61px;top:355px;font-size:14.5px;line-height:14.5px;color:#000;transform:scaleX(0.9783);">869</span>
<span class="t" style="left:377.16px;top:355px;font-size:14.5px;line-height:14.5px;color:#000;transform:scaleX(0.9783);">21 490</span>
<span class="t" style="left:295.55px;top:376px;font-size:14.5px;line-height:14.5px;color:#000;transform:scaleX(0.9783);">153</span>
<span class="t" style="left:377.16px;top:376px;font-size:14.5px;line-height:14.5px;color:#000;transform:scaleX(0.9783);">12 990</span>
<span class="t" style="left:303.44px;top:397px;font-size:14.5px;line-height:14.5px;color:#000;transform:scaleX(0.9783);">98</span>
<span class="t" style="left:385.05px;top:397px;font-size:14.5px;line-height:14.5px;color:#000;transform:scaleX(0.9783);">3 990</span>
<span class="t" style="left:295.35px;top:418px;font-size:14.5px;line-height:14.5px;color:#000;transform:scaleX(0.9783);">254</span>
<span class="t" style="left:396.88px;top:418px;font-size:14.5px;line-height:14.5px;color:#000;transform:scaleX(0.9783);">590</span>
<span class="t" style="left:295.52px;top:439px;font-size:14.5px;line-height:14.5px;color:#000;transform:scaleX(0.9783);">445</span>
<span class="t" style="left:396.88px;top:439px;font-size:14.5px;line-height:14.5px;color:#000;transform:scaleX(0.9783);">390</span>
<span class="t" style="left:296.70px;top:460px;font-size:14.5px;line-height:14.5px;color:#000;transform:scaleX(0.9783);">112</span>
<span class="t" style="left:396.88px;top:460px;font-size:14.5px;line-height:14.5px;color:#000;transform:scaleX(0.9783);">890</span>
<span class="t" style="left:295.62px;top:481px;font-size:14.5px;line-height:14.5px;color:#000;transform:scaleX(0.9783);">341</span>
<span class="t" style="left:385.05px;top:481px;font-size:14.5px;line-height:14.5px;color:#000;transform:scaleX(0.9783);">1 190</span>
<div style="left:990px;top:224px;width:1px;height:449px;background:#a6a6a6;"></div>
<div style="left:0px;top:672px;width:991px;height:1px;background:#a6a6a6;"></div>
<div style="left:994px;top:206px;width:15px;height:15px;background:#fff;box-sizing:border-box;border:1px solid #ababab;"></div>
<svg style="left:998px;top:211px;" width="8" height="5" viewBox="0 0 8 5"><path d="M0 4.5 L3.5 0.5 L7 4.5 Z" fill="#777"/></svg>
<div style="left:994px;top:221px;width:15px;height:416px;background:#fff;box-sizing:border-box;border:1px solid #ababab;"></div>
<div style="left:995px;top:637px;width:13px;height:21px;background:#dadada;"></div>
<div style="left:994px;top:658px;width:15px;height:15px;background:#fff;box-sizing:border-box;border:1px solid #ababab;"></div>
<svg style="left:998px;top:663px;" width="8" height="5" viewBox="0 0 8 5"><path d="M0 0.5 L3.5 4.5 L7 0.5 Z" fill="#777"/></svg>
<div style="left:101px;top:672px;width:107px;height:24px;background:#fff;"></div>
<div style="left:101px;top:672px;width:1px;height:24px;background:#ababab;"></div>
<div style="left:207px;top:672px;width:1px;height:24px;background:#ababab;"></div>
<div style="left:101px;top:695px;width:107px;height:2px;background:#007540;"></div>
<span class="t" style="left:112.56px;top:679px;font-size:13.5px;line-height:13.5px;color:#007540;font-weight:700;transform:scaleX(0.9589);">microexcel.ru</span>
<svg style="left:27.5px;top:682px;" width="5" height="7" viewBox="0 0 5 7"><path d="M4.5 0 V7 L0.3 3.5 Z" fill="#c0c0c0"/></svg>
<svg style="left:57px;top:682px;" width="5" height="7" viewBox="0 0 5 7"><path d="M0 0 V7 L4.2 3.5 Z" fill="#c0c0c0"/></svg>
<svg style="left:240.7px;top:677.3px;" width="17" height="17" viewBox="0 0 17 17"><circle cx="8.5" cy="8.5" r="7.3" fill="none" stroke="#777" stroke-width="1.2"/><path d="M4.5 8.5 H12.5 M8.5 4.5 V12.5" stroke="#555" stroke-width="1.6"/></svg>
<div style="left:607px;top:681px;width:2px;height:2px;background:#b0b0b0;border-radius:1px;"></div>
<div style="left:607px;top:685px;width:2px;height:2px;background:#b0b0b0;border-radius:1px;"></div>
<div style="left:607px;top:689px;width:2px;height:2px;background:#b0b0b0;border-radius:1px;"></div>
<div style="left:624px;top:679px;width:15px;height:15px;background:#fff;box-sizing:border-box;border:1px solid #ababab;"></div>
<svg style="left:629px;top:682px;" width="5" height="8" viewBox="0 0 5 8"><path d="M4.5 0.5 V7.5 L0.5 4 Z" fill="#666"/></svg>
<div style="left:638px;top:679px;width:300px;height:15px;background:#fff;box-sizing:border-box;border:1px solid #ababab;"></div>
<div style="left:938px;top:680px;width:39px;height:13px;background:#dadada;"></div>
<div style="left:976px;top:679px;width:15px;height:15px;background:#fff;box-sizing:border-box;border:1px solid #ababab;"></div>
<svg style="left:981px;top:682px;" width="5" height="8" viewBox="0 0 5 8"><path d="M0.5 0.5 V7.5 L4.5 4 Z" fill="#666"/></svg>
<div style="left:0px;top:700px;width:1013px;height:1px;background:#c8c8c8;"></div>
<div style="left:0px;top:701px;width:1013px;height:22px;background:#f3f3f3;"></div>
<span class="t" style="left:8.92px;top:705px;font-size:11px;line-height:11px;color:#444;transform:scaleX(1.0885);">Готово</span>
<svg style="left:67px;top:704px;" width="14" height="14" viewBox="0 0 14 14"><rect x="3.5" y="2.5" width="9.5" height="10" fill="#fff" stroke="#666"/><rect x="6" y="1.2" width="7.5" height="2.6" fill="#666"/><circle cx="2.7" cy="2.8" r="2.7" fill="#666"/><path d="M5.5 6.5h1.5m1 0h1.5m1 0h1.2 M5.5 8.5h1.5m1 0h1.5m1 0h1.2 M5.5 10.5h1.5m1 0h1.5m1 0h1.2" stroke="#666"/></svg>
<div style="left:713px;top:700px;width:37px;height:21px;background:#c8c8c8;"></div>
<svg style="left:724px;top:704px;" width="14" height="13" viewBox="0 0 14 13"><rect x="0.5" y="0.5" width="13" height="12" fill="none" stroke="#666" stroke-width="1"/><path d="M4.5 0.5V12.5M9 0.5V12.5M0.5 4.5H13.5M0.5 8.5H13.5" stroke="#666" stroke-width="1"/></svg>
<svg style="left:762px;top:704px;" width="14" height="13" viewBox="0 0 14 13"><rect x="0.5" y="0.5" width="13" height="12" fill="none" stroke="#666" stroke-width="1"/><rect x="3.5" y="2.5" width="7" height="8" fill="none" stroke="#666"/><path d="M5 5.5H9M5 7.5H9" stroke="#666"/></svg>
<svg style="left:800px;top:704px;" width="14" height="13" viewBox="0 0 14 13"><path d="M0.5 0.5H13.5V12.5H0.5Z M0.5 7H13.5 M5 0.5V7 M9 0.5V7" fill="none" stroke="#666" stroke-width="1"/></svg>
<div style="left:831px;top:710px;width:6px;height:2px;background:#444;"></div>
<div style="left:841px;top:710px;width:100px;height:1px;background:#9a9a9a;"></div>
<div style="left:889px;top:705px;width:5px;height:11px;background:#6a6a6a;"></div>
<div style="left:944px;top:710px;width:8px;height:2px;background:#444;"></div>
<div style="left:947px;top:707px;width:2px;height:8px;background:#444;"></div>
<span class="t" style="left:962.16px;top:705px;font-size:11px;line-height:11px;color:#444;">100 %</span>
<div style="left:422px;top:223px;width:104px;height:2px;background:#0f6b3b;"></div>
<div style="left:422px;top:223px;width:2px;height:276px;background:#0f6b3b;"></div>
<div style="left:524px;top:223px;width:2px;height:271px;background:#0f6b3b;"></div>
<div style="left:422px;top:497px;width:99px;height:2px;background:#0f6b3b;"></div>
<div style="left:424px;top:225px;width:99px;height:1px;background:#fff;"></div>
<div style="left:424px;top:225px;width:1px;height:272px;background:#fff;"></div>
<div style="left:523px;top:225px;width:1px;height:269px;background:#fff;"></div>
<div style="left:424px;top:496px;width:97px;height:1px;background:#fff;"></div>
<div style="left:526px;top:221px;width:1px;height:278px;background:#fff;"></div>
<div style="left:521px;top:494px;width:7px;height:7px;background:#fff;"></div>
<div style="left:522px;top:495px;width:5px;height:5px;background:#0f6b3b;"></div>
<div style="left:419px;top:217px;width:105px;height:281px;background:transparent;border:3px solid #ff0000;border-radius:8px;"></div>
<div style="left:1px;top:65px;width:1px;height:657px;background:#f6f6f6;"></div>
<div style="left:1011px;top:65px;width:1px;height:657px;background:#f6f6f6;"></div>
<div style="left:1px;top:721px;width:1011px;height:1px;background:#f6f6f6;"></div>
<div style="left:0px;top:0px;width:1px;height:723px;background:#0b7040;"></div>
<div style="left:1012px;top:0px;width:1px;height:723px;background:#0b7040;"></div>
<div style="left:0px;top:722px;width:1013px;height:1px;background:#0b7040;"></div>
</body></html>
